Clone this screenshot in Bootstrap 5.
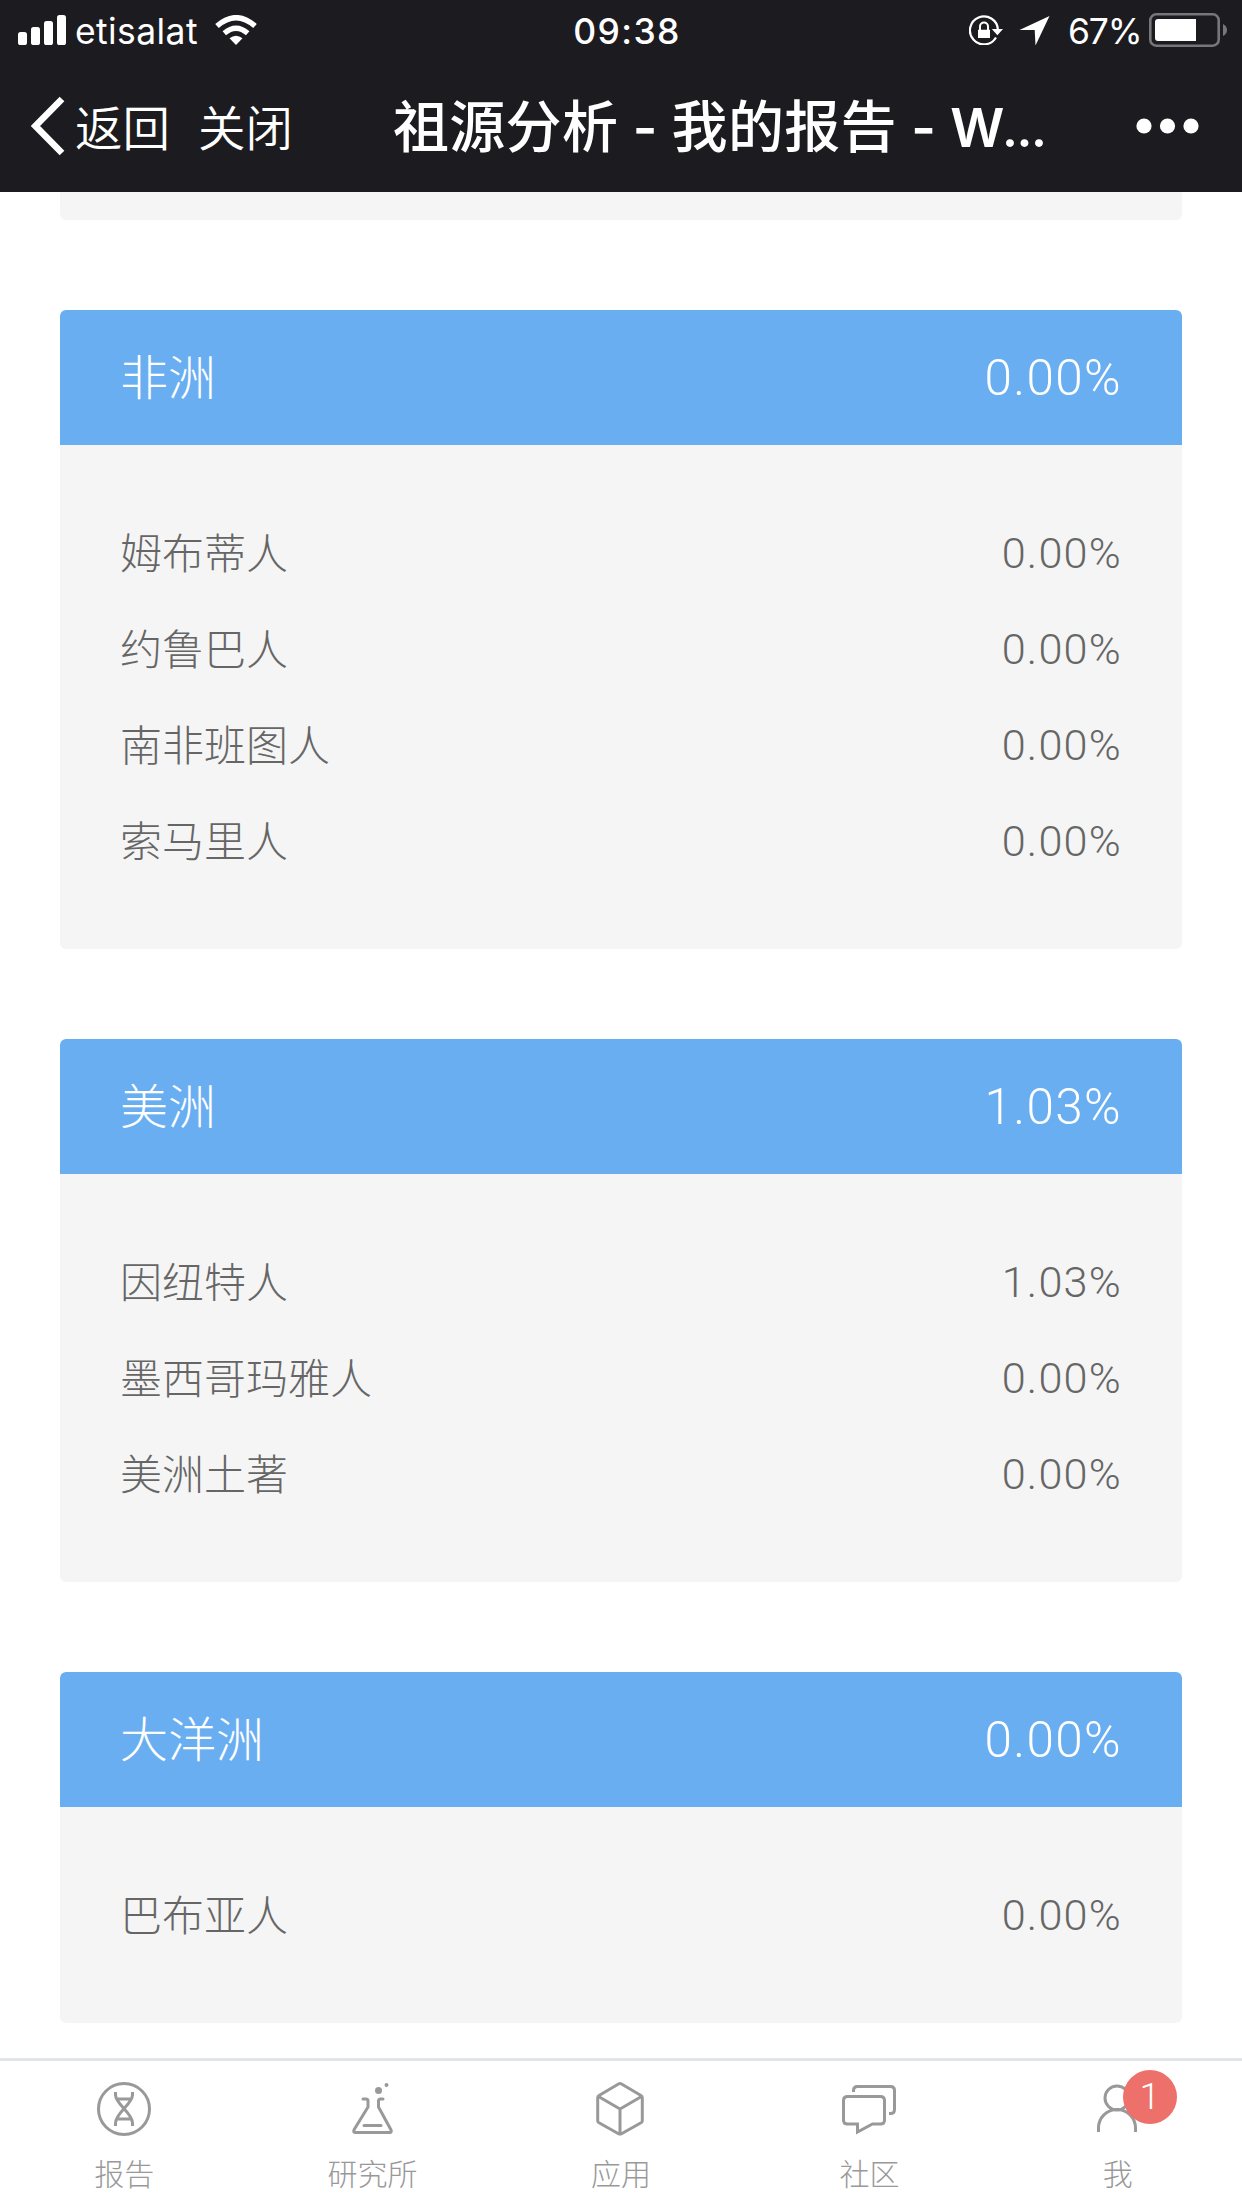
<!DOCTYPE html>
<html lang="zh-CN">
<head>
<meta charset="utf-8">
<meta name="viewport" content="width=device-width, initial-scale=1">
<title>祖源分析 - 我的报告</title>
<link href="https://cdn.jsdelivr.net/npm/bootstrap@5.3.0/dist/css/bootstrap.min.css" rel="stylesheet">
<style>
  body { font-family: Inter, "Noto Sans CJK SC", sans-serif; height: 2208px; background: #fff; overflow: hidden; }
  svg { display: block; flex: none; }
  .top-area { background: #1c1b20; height: 192px; color: #fff; }
  .status-row { height: 60px; padding: 0 15px 0 18px; font-size: 35.5px; line-height: 60px; }
  .status-side { flex: 1 1 0; }
  .carrier { width: 140px; margin-left: 9px; padding-top: 3px; letter-spacing: .4px; white-space: nowrap; }
  .clock { font-weight: 500; letter-spacing: 1.4px; font-size: 35.5px; padding: 3px 0 0 9px; }
  .percent { width: 79px; margin-left: 17px; margin-right: 2px; padding-top: 3px; letter-spacing: -1.2px; white-space: nowrap; font-size: 35.5px; }
  .title-row { height: 132px; padding: 0 43px 0 31px; line-height: 132px; }
  .nav-word { font-size: 47.5px; font-weight: 350; color: #fff; text-decoration: none; }
  .nav-word span { padding-top: 5px; }
  .back-word { margin-left: 2px; }
  .close-word { margin-left: 28px; }
  .page-title { width: 655px; margin-left: 100px; padding-top: 3px; font-size: 56px; font-weight: 500; letter-spacing: .3px; white-space: nowrap; }
  .page-title .latin { font-size: 53px; font-weight: 600; letter-spacing: -.2px; word-spacing: 1.3px; }
  .page-title .dots { letter-spacing: -1.5px; margin-left: -2px; font-size: 50px; }
  .report { padding: 0 60px; height: 1866px; overflow: hidden; }
  .region { border: 0; border-radius: 6px; margin-bottom: 90px; background: #f5f5f5; overflow: hidden; }
  .region-end { height: 28px; border-radius: 0 0 6px 6px; background: #f5f5f5; margin-bottom: 90px; }
  .region-head { height: 135px; padding: 0 60px; background: #6aaef2; color: #fff; font-size: 48px; font-weight: 300; border: 0; }
  .region-body { padding: 60px; color: #666; font-size: 42px; font-weight: 300; }
  .region-body li { height: 96px; }
  .num { font-family: Roboto, sans-serif; font-weight: 300; font-size: 1.03em; letter-spacing: .028em; padding-top: 2px; }
  .tabs { height: 150px; border-top: 3px solid #e1e5e8; background: #fff; color: #999; }
  .tab-item { flex: 1 1 0; padding-top: 18px; font-size: 30px; font-weight: 300; color: #999; text-decoration: none; line-height: 45px; }
  .tab-item svg { margin-bottom: 13px; }
  .count { position: absolute; left: 35px; top: -9px; width: 54px; height: 54px; padding: 0; border-radius: 50%; background: #ed706b; color: #fff; font-size: 37px; line-height: 54px; letter-spacing: 0; text-align: center; }
</style>
</head>
<body class="d-flex flex-column">
<header class="top-area">
  <div class="status-row d-flex align-items-center">
    <div class="status-side d-flex align-items-center">
      <svg width="48" height="30" fill="#fff"><rect y="17" width="9" height="13" rx="2.6"/><rect x="13" y="12" width="9" height="18" rx="2.6"/><rect x="26" y="6" width="9" height="24" rx="2.6"/><rect x="39" width="9" height="30" rx="2.6"/></svg>
      <span class="carrier">etisalat</span>
      <svg width="42" height="30" viewBox="0 0 42 30"><g fill="none" stroke="#fff" stroke-width="5.4"><path d="M2 11Q21-5.6 40 11"/><path d="M9.300 18.300Q21 8.200 32.700 18.300"/></g><path fill="#fff" d="M14.500 23.300Q21 18 27.500 23.300L21 30z"/></svg>
    </div>
    <div class="clock">09:38</div>
    <div class="status-side d-flex align-items-center justify-content-end">
      <svg width="34" height="30" viewBox="0 0 34 30"><path d="M27 22.500A14 14 0 1 1 28.900 14.500" fill="none" stroke="#fff" stroke-width="2.200"/><path fill="#fff" d="M22.800 14H34l-5.600 6.200zM9 14.800h12V23H9z"/><path d="M11 15.500V11.500a4 4 0 0 1 8 0v4" fill="none" stroke="#fff" stroke-width="2"/></svg>
      <svg class="ms-3" width="32" height="30" viewBox="0 0 32 30"><path fill="#fff" d="M30.500 1 16.500 30.500 15.700 15H.5z"/></svg>
      <span class="percent">67%</span>
      <svg width="78" height="34" viewBox="0 0 78 34"><rect x="1.300" y="1.300" width="68.400" height="31.400" rx="6" fill="none" stroke="#77767a" stroke-width="2.600"/><path fill="#fff" d="M9 6h38v22H9a3 3 0 0 1-3-3V9a3 3 0 0 1 3-3z"/><path fill="#77767a" d="M74 11q4 2 4 6t-4 6z"/></svg>
    </div>
  </div>
  <nav class="title-row d-flex align-items-center">
    <a class="nav-word d-flex align-items-center" href="#"><svg width="34" height="60" viewBox="0 0 34 60" class="me-2"><path d="M31 3 4.500 30 31 57" fill="none" stroke="#fff" stroke-width="6.600"/></svg><span class="back-word">返回</span></a>
    <a class="nav-word d-flex close-word" href="#"><span>关闭</span></a>
    <div class="page-title">祖源分析<span class="latin"> - </span>我的报告<span class="latin"> - W<span class="dots">...</span></span></div>
    <svg class="ms-auto" width="63" height="16" viewBox="0 0 63 16" fill="#fff"><circle cx="8" cy="8" r="7.600"/><circle cx="31.500" cy="8" r="7.600"/><circle cx="55" cy="8" r="7.600"/></svg>
  </nav>
</header>
<main class="report">
  <div class="region-end"></div>
  <section class="card region">
    <div class="card-header region-head d-flex justify-content-between align-items-center"><span>非洲</span><span class="num">0.00%</span></div>
    <ul class="region-body list-unstyled mb-0">
      <li class="d-flex justify-content-between align-items-center"><span>姆布蒂人</span><span class="num">0.00%</span></li>
      <li class="d-flex justify-content-between align-items-center"><span>约鲁巴人</span><span class="num">0.00%</span></li>
      <li class="d-flex justify-content-between align-items-center"><span>南非班图人</span><span class="num">0.00%</span></li>
      <li class="d-flex justify-content-between align-items-center"><span>索马里人</span><span class="num">0.00%</span></li>
    </ul>
  </section>
  <section class="card region">
    <div class="card-header region-head d-flex justify-content-between align-items-center"><span>美洲</span><span class="num">1.03%</span></div>
    <ul class="region-body list-unstyled mb-0">
      <li class="d-flex justify-content-between align-items-center"><span>因纽特人</span><span class="num">1.03%</span></li>
      <li class="d-flex justify-content-between align-items-center"><span>墨西哥玛雅人</span><span class="num">0.00%</span></li>
      <li class="d-flex justify-content-between align-items-center"><span>美洲土著</span><span class="num">0.00%</span></li>
    </ul>
  </section>
  <section class="card region">
    <div class="card-header region-head d-flex justify-content-between align-items-center"><span>大洋洲</span><span class="num">0.00%</span></div>
    <ul class="region-body list-unstyled mb-0">
      <li class="d-flex justify-content-between align-items-center"><span>巴布亚人</span><span class="num">0.00%</span></li>
    </ul>
  </section>
</main>
<nav class="tabs d-flex">
  <a class="tab-item d-flex flex-column align-items-center" href="#">
    <svg width="60" height="60" viewBox="0 0 60 60" fill="none" stroke="#999" stroke-width="3"><circle cx="30" cy="30" r="25.500"/><path d="M21.500 13v3C21.500 25 38.500 34 38.500 44v3M38.500 13v3C38.500 25 21.500 34 21.500 44v3M23 20h14M23 40h14"/></svg>报告</a>
  <a class="tab-item d-flex flex-column align-items-center" href="#">
    <svg width="60" height="60" viewBox="0 0 60 60" fill="none" stroke="#999" stroke-width="3" stroke-linecap="round" stroke-linejoin="round"><path d="M20 20h3q2 0 2 2v6L11.200 50.500q-1.500 3 1.500 3h33.600q3 0 1.500-3L35.500 28v-6q0-2 2-2h2.500M21 46.500h17"/><g fill="#999" stroke="none"><circle cx="35.500" cy="11.500" r="3.500"/><circle cx="43.500" cy="6" r="2"/></g></svg>研究所</a>
  <a class="tab-item d-flex flex-column align-items-center" href="#">
    <svg width="60" height="60" viewBox="1 0 60 60" fill="none" stroke="#999" stroke-width="3" stroke-linejoin="round"><path d="M28.500 5q1.500-.8 3 0L51 16.500q1.300.8 1.300 2.200v23q0 1.300-1.300 2.100L31.500 54.700q-1.500.8-3 0L9 43.800q-1.300-.8-1.300-2.100v-23q0-1.400 1.300-2.200zM8.500 17.500 30 30l21.500-12.500M30 30v25"/></svg>应用</a>
  <a class="tab-item d-flex flex-column align-items-center" href="#">
    <svg width="60" height="60" viewBox="0 0 60 60" fill="none" stroke="#999" stroke-width="3"><path d="M14.500 13v-1.500q0-4 4-4h33q4 0 4 4v19q0 4-4 4H50M8.500 17.500h33q4 0 4 4v19.500q0 4-4 4H33.500L18.500 53v-8H8.500q-4 0-4-4V21.500q0-4 4-4z"/></svg>社区</a>
  <a class="tab-item d-flex flex-column align-items-center" href="#">
    <span class="position-relative"><svg width="60" height="60" viewBox="0 0 60 60" fill="none" stroke="#999" stroke-width="3"><circle cx="29" cy="19" r="12"/><path d="M10.500 53v-4a18.500 18.500 0 0 1 37 0v4"/></svg><span class="count num">1</span></span>我</a>
</nav>
<script src="https://cdn.jsdelivr.net/npm/bootstrap@5.3.0/dist/js/bootstrap.bundle.min.js"></script>
</body>
</html>
